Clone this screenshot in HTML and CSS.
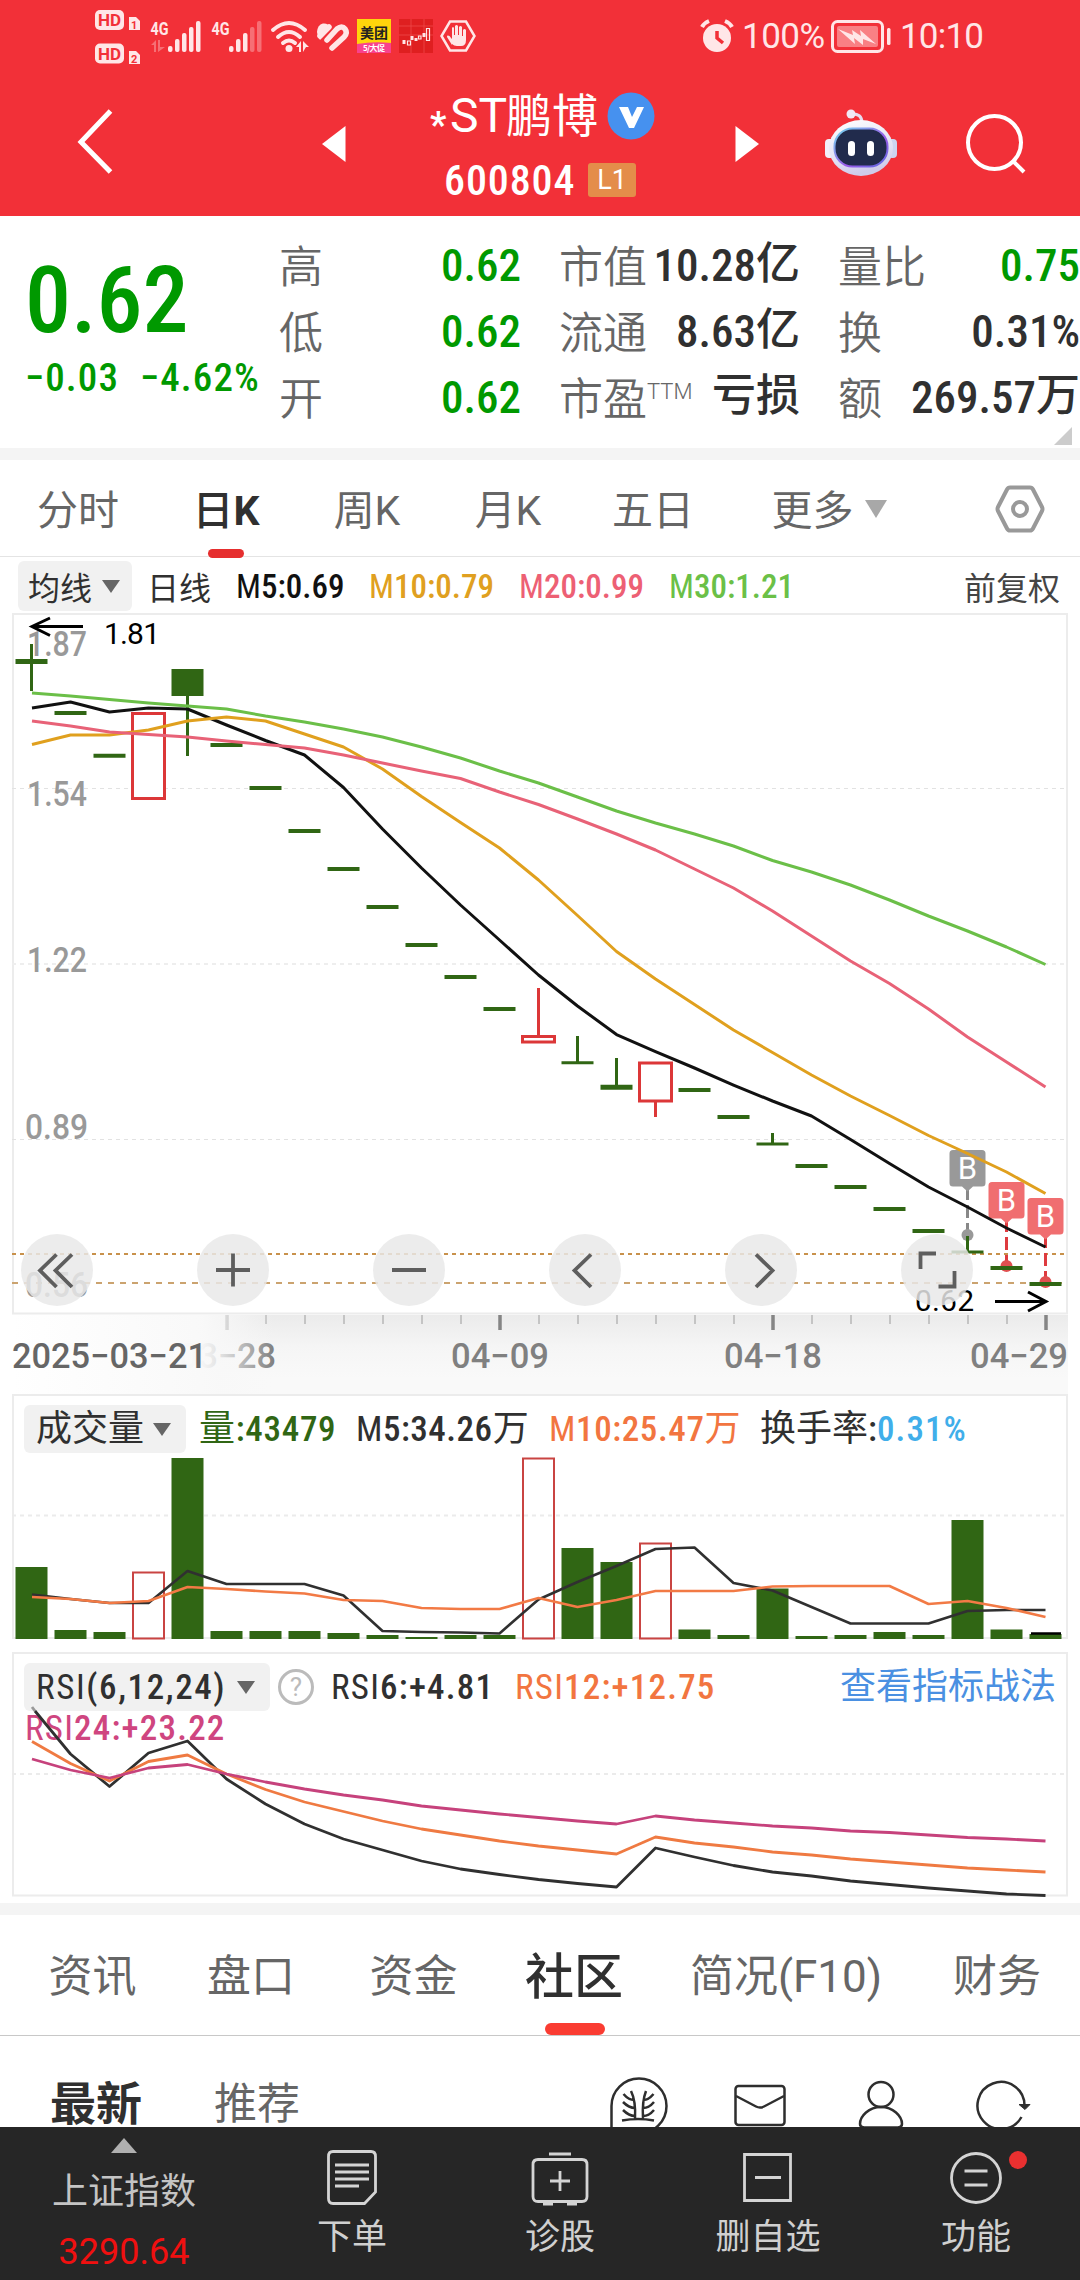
FILE: index.html
```html
<!DOCTYPE html>
<html lang="zh-CN">
<head>
<meta charset="utf-8">
<title>*ST鹏博 600804</title>
<link rel="stylesheet" href="styles.css">
</head>
<body>
<header class="top">
  <div class="status">
    <svg class="status-left" width="400" height="72" viewBox="90 0 400 72">
      <g fill="#ffe6e7">
        <rect x="95" y="10" width="29" height="20" rx="5"/><rect x="95" y="43.500" width="29" height="20" rx="5"/>
        <path d="M129 17h7l4 4v9h-11zM129 51h7l4 4v9h-11z"/>
        <rect x="168" y="46" width="4.500" height="6" rx="2"/><rect x="175" y="39" width="4.500" height="13" rx="2"/><rect x="182" y="33" width="4.500" height="19" rx="2"/><rect x="189" y="27" width="4.500" height="25" rx="2"/><rect x="196" y="21" width="4.500" height="31" rx="2"/>
        <rect x="229" y="46" width="4.500" height="6" rx="2"/><rect x="236" y="39" width="4.500" height="13" rx="2"/><rect x="243" y="33" width="4.500" height="19" rx="2"/>
        <g opacity=".35"><rect x="250" y="27" width="4.500" height="25" rx="2"/><rect x="257" y="21" width="4.500" height="31" rx="2"/><path d="M151 45l5-5v12h-2v-7zM158 40h2v7h5l-7 5z"/></g>
        <circle cx="289" cy="48.500" r="3.500"/><path d="M296 47l5-6v11h-2v-5zM303 41l6 6h-3l-3 5z"/>
      </g>
      <g fill="none" stroke="#ffe6e7" stroke-linecap="round">
        <path stroke-width="4" d="M273 30q16-14 32 0M278 37q11-10 22 0M283 43q6-5 12 0"/>
        <path stroke-width="5.500" d="M320 36l9-9M327 40l10-11q5-4 8 0t-1 8l-12 11"/>
        <path stroke-width="2.500" d="M450 21.500h16l8.500 14.500-8.500 14.500h-16L441.500 36z"/>
      </g>
      <path fill="#ffe6e7" d="M317 32c1-11 11-10 14-4l-11 12q-3-4-3-8z"/>
      <path fill="#ffe6e7" d="M452 45l-5-8c0-2 2-2 4 1l1 1V28q1-2 2 0v7h1v-9q1.500-2 3 0v9h1v-8q1.500-2 3 0v9h1v-6q1.500-2 3 0v10q0 6-5 6h-4q-3 0-5-2z"/>
      <g class="hd"><text x="98" y="26" textLength="23">HD</text><text x="98" y="59.500" textLength="23">HD</text></g>
      <g class="sim"><text x="131" y="28.500">1</text><text x="131" y="62.500">2</text></g>
      <g class="net"><text x="150.500" y="34.500" textLength="18" lengthAdjust="spacingAndGlyphs">4G</text><text x="211.500" y="34.500" textLength="18" lengthAdjust="spacingAndGlyphs">4G</text></g>
      <rect x="357" y="19" width="34" height="34" fill="#ffd50b"/><path fill="#f9418d" d="M357 44q17-3 34-1v10h-34z"/>
      <text class="mt" x="360" y="38" textLength="28">美团</text><text class="mt-sub" x="363" y="51" textLength="22">5/大促</text>
      <rect x="399" y="19" width="34" height="34" fill="#df1f20"/>
      <path stroke="#ee4a4a" stroke-width=".8" fill="none" d="M399 26h34M399 35h34M411 19v34M424 19v34"/>
      <g stroke="#ffe6e7" fill="none"><path d="M404 40v4M412 36v4M416 38v3M424 33v4" stroke-width="3"/><path d="M407.500 41h3v4h-3zM418.500 36h2.500v3h-2.500zM426.500 28.500h3v12h-3z" stroke-width="1.200"/></g>
    </svg>
    <svg width="35" height="40" viewBox="700 16 35 40" class="alarm"><circle cx="717" cy="38" r="14" fill="#ffe6e7"/><path d="M702 27q2-4 7-6M725 21q5 2 7 6" stroke="#ffe6e7" stroke-width="4" fill="none"/><path d="M717 31v7l6 5" stroke="#f22f37" stroke-width="3.500" fill="none"/></svg>
    <span class="battery-text">100%</span>
    <svg width="62" height="36" viewBox="830 18 62 36" class="battery"><rect x="832.500" y="21.500" width="50" height="30" rx="5" fill="none" stroke="#ffe6e7" stroke-width="3"/><rect x="837" y="26" width="41" height="21" rx="2" fill="#f98084"/><path fill="#ffe6e7" d="M838 29l15 6-1-5 9 6-1-6 16 14-13-5v6l-9-7 1 6z"/><rect x="887" y="28" width="3.500" height="17" rx="1.500" fill="#ffe6e7"/></svg>
    <span class="clock">10:10</span>
  </div>
  <div class="titlebar">
    <svg class="back" width="38" height="66" viewBox="0 0 38 66"><path d="M33.500 2L4 33l29.500 30" fill="none" stroke="#fff" stroke-width="5"/></svg>
    <svg class="prev" width="24" height="38" viewBox="0 0 24 38"><path fill="#fff" d="M23.500 1v36L0 19z"/></svg>
    <div class="name-block">
      <div class="name"><span class="star">*</span><span class="latin">ST</span><span>鹏博</span>
        <svg width="48" height="48" viewBox="0 0 48 48"><circle cx="24" cy="24" r="23.500" fill="#4691ef"/><path d="M12 15h9l4 10 5-10h7L27 36h-5z" fill="#fff"/></svg>
      </div>
      <div class="code"><span class="din">600804</span><span class="level">L1</span></div>
    </div>
    <svg class="next" width="24" height="38" viewBox="0 0 24 38"><path fill="#fff" d="M.5 1v36L24 19z"/></svg>
    <svg class="robot" width="72" height="70" viewBox="0 0 72 70">
      <defs><linearGradient id="shell" x1="0" y1="0" x2=".3" y2="1"><stop offset="0" stop-color="#fff"/><stop offset=".7" stop-color="#e2e0f3"/><stop offset="1" stop-color="#cfcbea"/></linearGradient>
      <linearGradient id="rim" x1="0" y1="0" x2="1" y2="1"><stop offset="0" stop-color="#72d8ee"/><stop offset=".6" stop-color="#9b5ae8"/><stop offset="1" stop-color="#5b6be0"/></linearGradient></defs>
      <path d="M26 6q11-1 11 9" fill="none" stroke="#e7dcee" stroke-width="3"/><circle cx="26" cy="6" r="4.500" fill="#f1e8f4"/>
      <rect x="0" y="31" width="9" height="19" rx="4" fill="#f2effa"/><rect x="63" y="31" width="9" height="19" rx="4" fill="#cdd4f0"/>
      <ellipse cx="36" cy="40" rx="32" ry="28" fill="url(#shell)"/>
      <rect x="9.500" y="20.500" width="53" height="38" rx="18" fill="#212b4c" stroke="url(#rim)" stroke-width="2"/>
      <rect x="23" y="33" width="7" height="15" rx="3.500" fill="#fff"/><rect x="42" y="33" width="7" height="15" rx="3.500" fill="#fff"/>
    </svg>
    <svg class="search" width="64" height="64" viewBox="0 0 64 64"><circle cx="30.500" cy="30.500" r="26.500" fill="none" stroke="#fff" stroke-width="4"/><path d="M49 49l11 11" stroke="#fff" stroke-width="4"/></svg>
  </div>
</header>

<section class="quote">
  <div class="price">
    <div class="last din">0.62</div>
    <div class="change din"><span>−0.03</span><span>−4.62%</span></div>
  </div>
  <dl class="stats">
    <dt>高</dt><dd class="down din">0.62</dd><dt>市值</dt><dd class="din">10.28<b>亿</b></dd><dt>量比</dt><dd class="down din">0.75</dd>
    <dt>低</dt><dd class="down din">0.62</dd><dt>流通</dt><dd class="din">8.63<b>亿</b></dd><dt>换</dt><dd class="din">0.31%</dd>
    <dt>开</dt><dd class="down din">0.62</dd><dt>市盈<sup>TTM</sup></dt><dd class="din"><b>亏损</b></dd><dt>额</dt><dd class="din">269.57<b>万</b></dd>
  </dl>
  <i class="corner"></i>
</section>

<nav class="periods">
  <span>分时</span><span class="on">日<b>K</b></span><span>周K</span><span>月K</span><span>五日</span><span>更多<svg width="22" height="18" viewBox="0 0 22 18"><path d="M0 0h22L11 18z" fill="#a8a8a8"/></svg></span>
  <span class="gear"><svg width="50" height="50" viewBox="0 0 50 50"><path d="M15 3.500h20q2 0 3 2L47 23q1 2 0 4L38 44.500q-1 2-3 2H15q-2 0-3-2L3 27q-1-2 0-4L12 5.500q1-2 3-2z" fill="none" stroke="#999" stroke-width="4"/><circle cx="25" cy="25" r="7" fill="none" stroke="#999" stroke-width="4"/></svg></span>
</nav>

<div class="ma-legend">
  <span class="pick">均线<svg width="18" height="13" viewBox="0 0 18 13"><path d="M0 0h18L9 13z" fill="#666"/></svg></span>
  <span class="line-name">日线</span>
  <span class="din m5"><i>M</i>5:0.69</span><span class="din m10"><i>M</i>10:0.79</span><span class="din m20"><i>M</i>20:0.99</span><span class="din m30"><i>M</i>30:1.21</span>
  <span class="adjust">前复权</span>
</div>

<svg class="kline" width="1080" height="782" viewBox="0 612 1080 782">
  <defs>
    <linearGradient id="axisShade" x1="0" y1="0" x2="0" y2="1"><stop offset="0" stop-color="#ebebeb"/><stop offset=".4" stop-color="#f5f5f5"/><stop offset=".8" stop-color="#f9f9f9"/></linearGradient>
    <linearGradient id="axisFade" x1="0" y1="0" x2="1" y2="0"><stop offset="0" stop-color="#fff"/><stop offset=".72" stop-color="#f9f9f9" stop-opacity=".98"/><stop offset=".8" stop-color="#f8f8f8" stop-opacity=".8"/><stop offset="1" stop-color="#f8f8f8" stop-opacity="0"/></linearGradient>
  </defs>
  <rect x="12" y="1315" width="1056" height="79" fill="url(#axisShade)"/>
  <path d="M13 614H1067V1313.500H13z" fill="#fff" stroke="#ececec" stroke-width="2"/>
  <g stroke="#e2e2e2" stroke-dasharray="4 4"><path d="M12 788.500H1067M12 1139.500H1067"/><path d="M12 964H1067" stroke="#eee" stroke-width="2"/></g>
  <path d="M12 1254H1067" stroke="#c8914b" stroke-width="2" stroke-dasharray="4 4"/>
  <path d="M12 1283H1067" stroke="#cba36f" stroke-width="2" stroke-dasharray="6 6"/>
  <g class="axis-label"><text x="27" y="656" textLength="60" lengthAdjust="spacingAndGlyphs">1.87</text><text x="27" y="805.500" textLength="60" lengthAdjust="spacingAndGlyphs">1.54</text><text x="27" y="971.500" textLength="60" lengthAdjust="spacingAndGlyphs">1.22</text><text x="25" y="1139" textLength="63" lengthAdjust="spacingAndGlyphs">0.89</text><text x="25" y="1296.500" textLength="63" lengthAdjust="spacingAndGlyphs">0.56</text></g>
  <g fill="none" stroke="#000" stroke-width="3"><path d="M83 626.500H32M50 618L32 626.500L50 635.500"/><path d="M995 1301.500H1046M1028 1292L1046 1301.500L1028 1311"/></g>
  <text class="extreme" x="104" y="644" textLength="56">1.81</text><text class="extreme" x="915" y="1311" textLength="59">0.62</text>
  <!-- buy markers -->
  <g>
    <path d="M967.500 1187V1230" stroke="#888" stroke-width="3" stroke-dasharray="13 5"/><circle cx="967.500" cy="1235" r="6" fill="#999"/>
    <path fill="#999" d="M953 1150h29q3.500 0 3.500 3.500v29.500q0 3.500-3.500 3.500h-9l-5.500 5-5.500-5h-9q-3.500 0-3.500-3.500v-29.500q0-3.500 3.500-3.500z"/>
    <path d="M1006.500 1219V1264M1045.500 1235V1280" stroke="#de3b3f" stroke-width="3" stroke-dasharray="13 5"/><circle cx="1006.500" cy="1266" r="6" fill="#e05050"/><circle cx="1045.500" cy="1282" r="6" fill="#e05050"/>
    <path fill="#f06e70" d="M992 1182h29q3.500 0 3.500 3.500v29.500q0 3.500-3.500 3.500h-9l-5.500 5-5.500-5h-9q-3.500 0-3.500-3.500v-29.500q0-3.500 3.500-3.500z"/>
    <path fill="#f06e70" d="M1031 1198h29q3.500 0 3.500 3.500v29.500q0 3.500-3.500 3.500h-9l-5.500 5-5.500-5h-9q-3.500 0-3.500-3.500v-29.500q0-3.500 3.500-3.500z"/>
    <g class="buy"><text x="967.500" y="1179">B</text><text x="1006.500" y="1211">B</text><text x="1045.500" y="1227">B</text></g>
  </g>
  <!-- candles -->
  <g stroke="#306614" fill="none">
    <path stroke-width="4" d="M54.500 713h32M93.500 755.700h32M210.500 745h32M249.500 788h32M288.500 831h32M327.500 869h32M366.500 907h32M405.500 945h32M444.500 977h32M483.500 1009h32M678.500 1090h32M717.500 1117h32M795.500 1166h32M834.500 1187h32M873.500 1209h32M912.500 1231h32M990.500 1268h32M1029.500 1284h32"/>
    <path stroke-width="5" d="M15.500 661.500h32M600.500 1087.300h32"/>
    <path stroke-width="3" d="M561.500 1062.700h32M756.500 1144h32M951.500 1252h32"/>
    <path stroke-width="3" d="M31.500 644v47M187.500 696v60M577.500 1036v26M616.500 1058v28M772.500 1133v10M967.500 1236v16"/>
  </g>
  <rect x="171.500" y="669" width="32" height="27" fill="#306614"/>
  <g stroke="#dc3738" stroke-width="3" fill="#fff"><rect x="132.500" y="713.500" width="32" height="85"/><path d="M538.500 988v47M655.500 1101v16"/><rect x="522.500" y="1036.500" width="32" height="5.500"/><rect x="639.500" y="1063" width="32" height="38"/></g>
  <!-- moving averages -->
  <g fill="none" stroke-width="3" stroke-linejoin="round">
    <polyline stroke="#111" points="32,708 70.500,702 109.500,712 148.500,708 187.500,709 226.500,725 265.500,740.500 304.500,755 343.500,787.500 382.500,829 421.500,868 460.500,905 499.500,940 538.500,975 577.500,1006 616.500,1034.500 655.500,1051.500 694.500,1068 733.500,1085 772.500,1101 811.500,1116 850.500,1139.500 889.500,1163.500 928.500,1187 967.500,1207 1006.500,1228 1045.500,1247"/>
    <polyline stroke="#e0a01e" points="32,744.500 70.500,735 109.500,735 148.500,730 187.500,721 226.500,717 265.500,721 304.500,734 343.500,747 382.500,769 421.500,796.500 460.500,822.500 499.500,848 538.500,880 577.500,915.500 616.500,951.500 655.500,979 694.500,1004.500 733.500,1030 772.500,1052.500 811.500,1075 850.500,1096 889.500,1115.500 928.500,1135.500 967.500,1153.500 1006.500,1172 1045.500,1193.500"/>
    <polyline stroke="#e86277" points="32,721 70.500,726 109.500,732 148.500,734.500 187.500,737 226.500,741 265.500,744.500 304.500,748 343.500,755 382.500,763 421.500,771 460.500,778.500 499.500,792 538.500,804.500 577.500,819 616.500,834 655.500,850 694.500,869 733.500,888 772.500,911 811.500,936 850.500,961 889.500,983.500 928.500,1009 967.500,1037 1006.500,1062 1045.500,1087"/>
    <polyline stroke="#6bbf48" points="32,693 70.500,696 109.500,699.500 148.500,703 187.500,706 226.500,709 265.500,716 304.500,722 343.500,729 382.500,737 421.500,747 460.500,758 499.500,771 538.500,783 577.500,797 616.500,811 655.500,823 694.500,834 733.500,846 772.500,860.500 811.500,872 850.500,885 889.500,900 928.500,916 967.500,931 1006.500,947 1045.500,964.500"/>
  </g>
  <!-- date axis -->
  <path stroke="#c4c4c4" stroke-width="2" d="M266 1315v9M305 1315v9M344 1315v9M383 1315v9M422 1315v9M461 1315v9M539 1315v9M578 1315v9M617 1315v9M656 1315v9M695 1315v9M734 1315v9M812 1315v9M851 1315v9M890 1315v9M929 1315v9M968 1315v9M1007 1315v9"/>
  <path stroke="#858585" stroke-width="3.500" d="M227 1315v15M500 1315v15M773 1315v15M1046 1315v15"/>
  <g class="date"><text x="179" y="1368" textLength="97" lengthAdjust="spacingAndGlyphs">03−28</text><text x="451" y="1368" textLength="98" lengthAdjust="spacingAndGlyphs">04−09</text><text x="724" y="1368" textLength="98" lengthAdjust="spacingAndGlyphs">04−18</text><text x="970" y="1368" textLength="98" lengthAdjust="spacingAndGlyphs">04−29</text></g>
  <rect x="12" y="1315" width="262" height="79" fill="url(#axisFade)"/>
  <text class="date first" x="12" y="1368" textLength="195" lengthAdjust="spacingAndGlyphs">2025−03−21</text>
  <!-- chart controls -->
  <g fill="#e8e8e8" fill-opacity=".84"><circle cx="57" cy="1270" r="36"/><circle cx="233" cy="1270" r="36"/><circle cx="409" cy="1270" r="36"/><circle cx="585" cy="1270" r="36"/><circle cx="761" cy="1270" r="36"/><circle cx="937" cy="1270" r="36"/></g>
  <path fill="none" stroke="#5e5e5e" stroke-width="3.800" d="M56.500 1254.500L40 1270.500L56.500 1287M72 1254.500L55.500 1270.500L72 1287M216 1270h34M233 1253.500v33M392 1270h34M591 1254.500L574.500 1270.500L591 1287M756 1254.500L772.500 1270.500L756 1287M936 1253.500H920.500V1269M954.500 1271V1286.500H938.500"/>
</svg>

<section class="panel volume">
  <svg class="plot" width="1080" height="258" viewBox="0 1394 1080 258">
    <path d="M13 1395H1067V1638H13z" fill="#fff" stroke="#ececec" stroke-width="2"/>
    <path d="M12 1515.500H1067" stroke="#ebebeb" stroke-width="2" stroke-dasharray="4 4"/>
    <path fill="#306614" d="M15.500 1567h32v72h-32zM54.500 1630h32v9h-32zM93.500 1632h32v7h-32zM171.500 1458h32v181h-32zM210.500 1631h32v8h-32zM249.500 1631h32v8h-32zM288.500 1631h32v8h-32zM327.500 1633h32v6h-32zM366.500 1635h32v4h-32zM405.500 1637h32v2h-32zM444.500 1635h32v4h-32zM483.500 1635h32v4h-32zM561.500 1548h32v91h-32zM600.500 1562h32v77h-32zM678.500 1629.500h32v9.500h-32zM717.500 1635h32v4h-32zM756.500 1588.500h32v50.500h-32zM795.500 1636h32v3h-32zM834.500 1635h32v4h-32zM873.500 1632h32v7h-32zM912.500 1635h32v4h-32zM951.500 1520h32v119h-32zM990.500 1629.500h32v9.500h-32zM1029.500 1634h32v5h-32z"/>
    <path fill="none" stroke="#c94442" stroke-width="2" d="M133 1572.500h31v66h-31zM523 1458.500h31v180h-31zM640 1543.500h31v95h-31z"/>
    <path d="M1031 1633.500h30" stroke="#000" stroke-width="2.500"/>
    <g fill="none" stroke-width="2.600" stroke-linejoin="round">
      <polyline stroke="#303030" points="32,1594.500 70.500,1599 109.500,1603 148.500,1603 187.500,1571 226.500,1584 265.500,1584 304.500,1584 343.500,1595.500 382.500,1631 421.500,1632 460.500,1632.500 499.500,1633.500 538.500,1599.500 577.500,1582 616.500,1566 655.500,1549 694.500,1547.500 733.500,1583 772.500,1590.500 811.500,1607 850.500,1623.500 889.500,1623.500 928.500,1623.500 967.500,1611 1006.500,1610 1045.500,1610"/>
      <polyline stroke="#f27a45" points="32,1597 70.500,1599 109.500,1603 148.500,1601 187.500,1587 226.500,1589 265.500,1591.500 304.500,1593.500 343.500,1600 382.500,1601 421.500,1608 460.500,1609 499.500,1609 538.500,1598 577.500,1607 616.500,1600 655.500,1591 694.500,1591 733.500,1591 772.500,1586.500 811.500,1586 850.500,1586 889.500,1586 928.500,1604 967.500,1601 1006.500,1608 1045.500,1617"/>
    </g>
  </svg>
  <div class="panel-head">
    <span class="pick">成交量<svg width="18" height="13" viewBox="0 0 18 13"><path d="M0 0h18L9 13z" fill="#666"/></svg></span>
    <span class="din v-now"><b>量</b>:43479</span><span class="din v5"><i>M</i>5:34.26<b>万</b></span><span class="din v10"><i>M</i>10:25.47<b>万</b></span><span class="din turn"><b>换手率</b>:<em>0.31%</em></span>
  </div>
</section>

<section class="panel rsi">
  <svg class="plot" width="1080" height="251" viewBox="0 1652 1080 251">
    <path d="M13 1653H1067V1895.500H13z" fill="#fff" stroke="#ececec" stroke-width="2"/>
    <path d="M12 1774H1067" stroke="#ebebeb" stroke-width="2" stroke-dasharray="4 4"/>
  </svg>
  <div class="panel-head">
    <span class="pick din"><i>RSI</i>(6,12,24)<svg width="18" height="13" viewBox="0 0 18 13"><path d="M0 0h18L9 13z" fill="#666"/></svg></span>
    <span class="help">?</span>
    <span class="din r6"><i>RSI</i>6:+4.81</span><span class="din r12"><i>RSI</i>12:+12.75</span>
    <a class="tactics">查看指标战法</a>
  </div>
  <div class="din r24"><i>RSI</i>24:+23.22</div>
  <svg class="plot" width="1080" height="251" viewBox="0 1652 1080 251">
    <g fill="none" stroke-width="2.800" stroke-linejoin="round">
      <polyline stroke="#999" points="32,1707 35,1711"/>
      <polyline stroke="#303030" points="35,1711 70.500,1754 109.500,1786.500 148.500,1753 187.500,1741 226.500,1779 265.500,1804 304.500,1824 343.500,1839 382.500,1850 421.500,1861 460.500,1869 499.500,1874.500 538.500,1879.500 577.500,1883.500 616.500,1887 655.500,1848 694.500,1857 733.500,1865.500 772.500,1872 811.500,1876 850.500,1881 889.500,1884.500 928.500,1888 967.500,1891 1006.500,1894 1045.500,1895.500"/>
      <polyline stroke="#ef7a42" points="32,1741.500 70.500,1763.500 109.500,1781 148.500,1761.500 187.500,1755 226.500,1774 265.500,1789.500 304.500,1802 343.500,1811.500 382.500,1821 421.500,1829 460.500,1835 499.500,1841 538.500,1846 577.500,1850 616.500,1854 655.500,1837 694.500,1843 733.500,1847 772.500,1852 811.500,1855 850.500,1859 889.500,1862 928.500,1865 967.500,1868 1006.500,1870 1045.500,1872"/>
      <polyline stroke="#c6427c" points="32,1759 70.500,1770 109.500,1778 148.500,1768 187.500,1764.500 226.500,1774 265.500,1782 304.500,1789 343.500,1795 382.500,1800 421.500,1806 460.500,1810 499.500,1814 538.500,1817.500 577.500,1821 616.500,1824 655.500,1816 694.500,1820 733.500,1823 772.500,1826 811.500,1828 850.500,1831 889.500,1832.500 928.500,1835 967.500,1837.500 1006.500,1839 1045.500,1841"/>
    </g>
  </svg>
</section>

<nav class="sections">
  <span>资讯</span><span>盘口</span><span>资金</span><span class="on">社区</span><span>简况(F10)</span><span>财务</span>
</nav>

<section class="feed">
  <span class="latest">最新</span><span class="recommend">推荐</span>
  <svg width="470" height="92" viewBox="600 2036 470 92" fill="none" stroke="#2e2e2e" stroke-width="2.500">
    <path d="M611.500 2134v-28A27.500 27.500 0 1 1 639 2133.500h-27"/>
    <path d="M622 2120.500q16-3 32 0M631 2091q5 10 4 28M646 2091q-4 10-3 28M623.500 2094q5 6 11 6M623 2102q6 6 12 6M623 2110q6 6 12 6M653.500 2094q-5 6-10 6M654 2102q-5 6-11 6M654 2110q-5 6-11 6"/>
    <rect x="735.500" y="2086" width="49" height="39" rx="3"/><path d="M736 2096l20 10.500q4 2 8 0L784 2096"/>
    <circle cx="881" cy="2094.500" r="12.500"/><path d="M881 2107c-12 0-21 9-21 17q0 3 4 3.500h34q4-.5 4-3.500c0-8-9-17-21-17z"/>
    <path d="M1024.500 2105.500a23.500 23.500 0 1 0-3 11.500"/><path d="M1019 2104.500h11l-5 5z" fill="#2e2e2e" stroke-width="1"/>
  </svg>
</section>

<footer class="dock">
  <div class="index"><svg width="26" height="15" viewBox="0 0 26 15"><path d="M13 0l13 15H0z" fill="#b0b0b0"/></svg><span>上证指数</span><strong>3290.64</strong></div>
  <div class="tool"><svg width="60" height="60" viewBox="0 0 60 60"><path d="M11 4.500h38q4.500 0 4.500 5V45L42.500 56.500H11q-4.500 0-4.500-5v-42q0-5 4.500-5z"/><path d="M13 18h34M13 25h34M13 32h34M13 39h24"/></svg><span>下单</span></div>
  <div class="tool"><svg width="60" height="60" viewBox="0 0 60 60"><path d="M19 7h22M8 12.500h44q5 0 5 5v32q0 5-5 5H8q-5 0-5-5v-32q0-5 5-5zM30 24v20M20 34h20"/><path d="M13 57h10M37 57h10"/></svg><span>诊股</span></div>
  <div class="tool"><svg width="60" height="60" viewBox="0 0 60 60"><path d="M6.500 7.500h46v46h-46zM17 30.500h26"/></svg><span>删自选</span></div>
  <div class="tool"><svg width="60" height="60" viewBox="0 0 60 60"><circle cx="30" cy="31" r="24.500"/><path d="M18.500 24h23M18.500 38h23"/></svg><i class="dot"></i><span>功能</span></div>
</footer>
</body>
</html>
```
FILE: styles.css
```css
* { box-sizing: border-box; }
body {
  margin: 0;
  width: 1080px;
  height: 2280px;
  overflow: hidden;
  background: #fff;
  color: #303030;
  font-family: Roboto, "Noto Sans CJK SC", sans-serif;
}
svg { display: block; flex: none; }
span, dt, dd { white-space: nowrap; }
i, em { font-style: normal; }
.din { font-family: Roboto, "Noto Sans CJK SC", sans-serif; font-weight: 500; font-stretch: 86%; }
.din i { font-weight: 400; }
.din b { font-weight: 500; }

/* header */
.top { height: 216px; background: #f23038; color: #fff; }
.status { display: flex; height: 72px; align-items: flex-start; padding-left: 90px; color: #ffe6e7; font-size: 35px; line-height: 74px; }
.status-left { margin-right: 210px; }
.alarm { margin-top: 16px; }
.battery-text { width: 87px; margin-left: 7px; letter-spacing: -.5px; }
.battery { margin: 18px 8px 0 1px; }
.clock { letter-spacing: -.8px; }
.hd text { font: 700 17px Roboto, sans-serif; fill: #f23038; }
.sim text { font: 700 11px Roboto, sans-serif; fill: #f23038; }
.net text { font: 700 19px Roboto, sans-serif; fill: #ffe6e7; }
.mt { font: 700 14px "Noto Sans CJK SC", sans-serif; fill: #222; }
.mt-sub { font: 700 8px "Noto Sans CJK SC", sans-serif; fill: #fff; }
.titlebar { display: flex; height: 144px; align-items: flex-start; }
.back { margin: 37px 0 0 77px; }
.prev { margin: 53px 0 0 207px; }
.name-block { width: 226px; margin: 15px 0 0 84px; }
.name { display: flex; align-items: center; height: 58px; font-size: 46px; line-height: 60px; }
.star { width: 20px; font-size: 36px; font-weight: 700; line-height: 76px; align-self: flex-start; }
.latin { width: 56px; font-size: 48px; }
.name svg { margin-left: 9px; }
.code { display: flex; align-items: center; height: 46px; margin-top: 12px; padding-left: 14px; font-size: 42px; }
.code .din { width: 133px; letter-spacing: .9px; }
.level { width: 48px; height: 34px; margin-left: 11px; border-radius: 3px; background: #e48d4a; font-size: 27px; line-height: 34px; text-align: center; }
.next { margin: 53px 0 0 79px; }
.robot { margin: 36px 0 0 66px; }
.search { margin: 40px 0 0 67px; }

/* quote */
.quote { position: relative; display: flex; height: 244px; border-bottom: 12px solid #f4f4f4; }
.price { width: 279px; padding-left: 25px; color: #090; }
.last { height: 134px; padding-top: 32px; font-size: 92px; line-height: 106px; font-stretch: 80%; }
.change { display: flex; font-size: 39px; line-height: 56px; letter-spacing: 1.1px; }
.change span { width: 115px; }
.stats { display: grid; grid-template-columns: 60px 182px 158px 121px 139px 141px; grid-auto-rows: 66px; margin: 16px 0 0; width: 801px; }
.stats dt { font-size: 44px; line-height: 64px; color: #666; font-family: "Noto Sans CJK SC", sans-serif; font-weight: 350; }
.stats dt:nth-of-type(3n+2), .stats dt:nth-of-type(3n) { margin-left: 38px; }
.stats dd { display: flex; justify-content: flex-end; margin: 0; font-size: 45px; line-height: 68px; font-stretch: 83%; }
.stats dd b { font-size: 44px; line-height: 64px; }
.stats .down { color: #090; }
.stats sup { font-size: 22px; line-height: 0; vertical-align: 16px; font-family: Roboto, sans-serif; }
.corner { position: absolute; right: 8px; bottom: 3px; border: 9px solid; border-color: transparent #ccc #ccc transparent; }

/* period tabs */
.periods { display: grid; grid-template-columns: 156px 140px 142px 140px 150px 202px 150px; height: 97px; border-bottom: 1px solid #e4e4e4; font-size: 41px; line-height: 94px; color: #666; }
.periods span { position: relative; display: flex; justify-content: center; align-items: center; padding-top: 4px; }
.periods svg { margin: -4px 0 0 11px; }
.periods .gear svg { margin-left: 30px; }
.periods .on { color: #303030; font-weight: 500; }
.periods .on::after { content: ""; position: absolute; left: 52px; bottom: 0; width: 36px; height: 9px; border-radius: 5px; background: #e62e2e; }

.pick { display: flex; align-items: center; background: #f1f1f1; border-radius: 6px; }
.pick svg { margin-left: auto; }
.ma-legend { display: flex; align-items: center; height: 55px; padding: 3px 20px 0 18px; font-size: 32px; }
.ma-legend .pick { width: 114px; height: 50px; padding: 0 12px 0 10px; }
.ma-legend .din { font-size: 33px; }
.line-name { width: 74px; margin-left: 15px; }
.line-name + .din { margin-left: 15px; }
.m5 { width: 133px; color: #111; }
.m10 { width: 150px; color: #e0a020; }
.m20 { width: 150px; color: #ed6074; }
.m30 { width: 150px; color: #6bc047; }
.adjust { margin-left: auto; color: #444; }
.kline { font-family: Roboto, sans-serif; }
.axis-label text { font: 500 35px Roboto, sans-serif; fill: #999; }
.extreme { font: 400 30px Roboto, sans-serif; }
.buy text { font: 400 31px Roboto, sans-serif; fill: #fff; text-anchor: middle; }
.date { font: 500 35px Roboto, sans-serif; fill: #808080; }
.first { fill: #666; }

/* indicator panels */
.panel { position: relative; }
.plot { position: absolute; left: 0; top: 0; }
.volume { height: 258px; }
.rsi { height: 251px; }
.panel-head { position: relative; display: flex; align-items: center; height: 48px; margin: 0 24px; top: 11px; font-size: 35px; line-height: 49px; }
.volume .pick { width: 162px; height: 48px; padding: 0 15px 0 12px; }
.volume .pick, .panel-head b { font-size: 36px; font-weight: 400; }
.v-now { width: 157px; margin-left: 13px; color: #306614; letter-spacing: .7px; }
.v5 { width: 193px; letter-spacing: .5px; }
.v10 { width: 211px; color: #f27540; letter-spacing: .6px; }
.turn em { color: #40aeea; letter-spacing: 1.1px; }
.rsi .panel-head, .r24 { letter-spacing: 1.2px; }
.rsi .pick { width: 246px; height: 48px; padding: 0 15px 0 12px; letter-spacing: 1.6px; }
.help { width: 36px; height: 36px; margin: 0 17px 0 8px; border: 3px solid #bbb; border-radius: 50%; font-size: 26px; line-height: 31px; text-align: center; letter-spacing: 0; color: #bbb; }
.r6 { width: 184px; }
.r12 { color: #f27540; }
.tactics { margin-left: auto; font-size: 36px; line-height: 51px; letter-spacing: 0; color: #4a90e2; }
.r24 { position: relative; top: 11px; margin-left: 25px; font-size: 35px; line-height: 36px; color: #cf4580; }

/* content tabs */
.sections { display: grid; grid-template-columns: 185px 132px 193px 128px 296px 126px; height: 133px; border-top: 12px solid #f4f4f4; border-bottom: 1px solid #c8c8c8; font-size: 44px; line-height: 125px; color: #666; }
.sections span { position: relative; display: flex; justify-content: center; height: 120px; }
.sections .on { font-size: 49px; font-weight: 500; color: #303030; }
.sections .on::after { content: ""; position: absolute; left: 35px; bottom: 0; width: 60px; height: 12px; border-radius: 6px; background: #fa3c32; }
.feed { display: flex; height: 91px; overflow: hidden; line-height: 136px; color: #666; }
.latest { width: 164px; margin-left: 50px; font-size: 46px; font-weight: 700; color: #303030; }
.recommend { width: 386px; font-size: 43px; }

/* bottom dock */
.dock { display: grid; grid-template-columns: 248px repeat(4, 208px); height: 153px; background: #262626; color: #d0d0d0; font-size: 35px; }
.index { display: flex; flex-direction: column; align-items: center; padding-top: 11px; }
.index span { margin-top: 12px; font-size: 36px; line-height: 55px; color: #c4c4c4; }
.index strong { margin-top: 5px; font-size: 36px; font-weight: 400; line-height: 54px; color: #f01010; }
.tool { position: relative; display: flex; flex-direction: column; align-items: center; padding-top: 20px; }
.tool svg { fill: none; stroke: #d4d4d4; stroke-width: 2.800; }
.tool span { margin-top: 4px; line-height: 53px; }
.dot { position: absolute; left: 137px; top: 24px; width: 18px; height: 18px; border-radius: 50%; background: #e93030; }
```
